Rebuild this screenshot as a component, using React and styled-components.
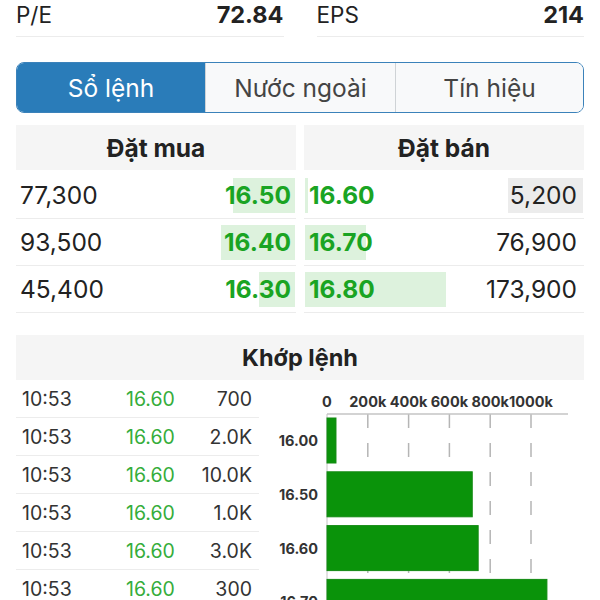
import React from 'react'
import styled, { createGlobalStyle } from 'styled-components'

const GREEN = '#1aa423'
const LIGHT_GREEN = '#ddf2dd'

const stats = [
  { label: 'P/E', value: '72.84' },
  { label: 'EPS', value: '214' }
]

const tabs = ['Sổ lệnh', 'Nước ngoài', 'Tín hiệu']

const bids = [
  { qty: '77,300', price: '16.50', depth: 62 },
  { qty: '93,500', price: '16.40', depth: 74 },
  { qty: '45,400', price: '16.30', depth: 36 }
]

const asks = [
  { qty: '5,200', price: '16.60', depth: 3, qtyDepth: 75 },
  { qty: '76,900', price: '16.70', depth: 61 },
  { qty: '173,900', price: '16.80', depth: 141 }
]

const trades = [
  ['10:53', '16.60', '700'],
  ['10:53', '16.60', '2.0K'],
  ['10:53', '16.60', '10.0K'],
  ['10:53', '16.60', '1.0K'],
  ['10:53', '16.60', '3.0K'],
  ['10:53', '16.60', '300']
]

const volumes = [
  { price: '16.00', vol: 44 },
  { price: '16.50', vol: 712 },
  { price: '16.60', vol: 741 },
  { price: '16.70', vol: 1078 }
]

const App = () => (
  <Page>
    <GlobalStyle />
    <StatsRow>
      {stats.map(s => (
        <StatCell key={s.label}>
          <span>{s.label}</span>
          <StatValue>{s.value}</StatValue>
        </StatCell>
      ))}
    </StatsRow>

    <Tabs>
      {tabs.map((t, i) => (
        <Tab key={t} active={i === 0}>{t}</Tab>
      ))}
    </Tabs>

    <Book>
      <BookSide>
        <BookHeader>Đặt mua</BookHeader>
        {bids.map(b => (
          <BookRow key={b.price}>
            <DepthBar side='right' style={{ width: b.depth }} />
            <Qty>{b.qty}</Qty>
            <Price>{b.price}</Price>
          </BookRow>
        ))}
      </BookSide>
      <BookSide right>
        <BookHeader>Đặt bán</BookHeader>
        {asks.map(a => (
          <BookRow key={a.price} right>
            <DepthBar side='left' style={{ width: a.depth }} />
            {a.qtyDepth && <DepthBar side='right' gray style={{ width: a.qtyDepth }} />}
            <Price>{a.price}</Price>
            <Qty>{a.qty}</Qty>
          </BookRow>
        ))}
      </BookSide>
    </Book>

    <Matched>
      <MatchedHeader>Khớp lệnh</MatchedHeader>
      <MatchedBody>
        <TradeList>
          {trades.map((t, i) => (
            <TradeRow key={i}>
              <span>{t[0]}</span>
              <TradePrice>{t[1]}</TradePrice>
              <TradeVol>{t[2]}</TradeVol>
            </TradeRow>
          ))}
        </TradeList>
        <ChartWrap>
          <VolumeChart />
        </ChartWrap>
      </MatchedBody>
    </Matched>
  </Page>
)

const VolumeChart = () => {
  const x0 = 63
  const step = 40.8 / 200
  const ticks = [0, 200, 400, 600, 800, 1000]
  return (
    <svg width='320' height='230' viewBox='0 0 320 230'>
      {ticks.slice(1).map(t => (
        <line key={t} x1={x0 + t * step} x2={x0 + t * step} y1='34' y2='230'
          stroke='#b5b5b5' strokeWidth='1.5' strokeDasharray='14 15' />
      ))}
      <line x1={x0} x2='304' y1='34' y2='34' stroke='#c4c4c4' strokeWidth='1.5' />
      <line x1={x0} x2={x0} y1='34' y2='230' stroke='#c4c4c4' strokeWidth='1' />
      {ticks.map(t => (
        <text key={t} x={x0 + t * step} y='27' textAnchor='middle'
          fontFamily='Inter, sans-serif' fontWeight='700' fontSize='14.5' fill='#333'>
          {t === 0 ? '0' : `${t}k`}
        </text>
      ))}
      {volumes.map((v, i) => {
        const y = 38 + i * 53.8
        return (
          <g key={v.price}>
            <rect x={x0} y={y} width={v.vol * step} height='45' fill='#0a930a' stroke='#128a12' strokeWidth='1' />
            <text x='54' y={y + 28} textAnchor='end'
              fontFamily='Inter, sans-serif' fontWeight='700' fontSize='14.5' fill='#333'>
              {v.price}
            </text>
          </g>
        )
      })}
    </svg>
  )
}

const GlobalStyle = createGlobalStyle`
  body {
    margin: 0;
    background: #fff;
    font-family: Inter, "Noto Sans", sans-serif;
    color: #222;
    overflow: hidden;
  }
`

const Page = styled.div`
  padding: 0 16px;
  height: 600px;
  overflow: hidden;
`

const StatsRow = styled.div`
  display: grid;
  grid-template-columns: 1fr 1fr;
  column-gap: 33px;
`

const StatCell = styled.div`
  display: flex;
  justify-content: space-between;
  height: 36px;
  line-height: 30px;
  font-size: 22.5px;
  border-bottom: 1px solid #ececec;
`

const StatValue = styled.span`
  font-weight: 700;
  font-size: 23.5px;
`

const Tabs = styled.div`
  margin-top: 25px;
  display: grid;
  grid-template-columns: 188px 190px 1fr;
  height: 51px;
  border: 1.5px solid #3b82ba;
  border-radius: 8px;
  overflow: hidden;
  box-sizing: border-box;
`

const Tab = styled.div`
  display: flex;
  align-items: center;
  justify-content: center;
  font-size: 24.5px;
  background: ${p => (p.active ? '#2a7cb9' : '#f8f9fa')};
  color: ${p => (p.active ? '#fff' : '#444')};
  & + & {
    border-left: 1.5px solid #cfd3d6;
  }
`

const Book = styled.div`
  margin-top: 12px;
  display: grid;
  grid-template-columns: 1fr 1fr;
  column-gap: 8px;
`

const BookSide = styled.div`
  display: flex;
  flex-direction: column;
`

const BookHeader = styled.div`
  height: 45px;
  margin-bottom: 2px;
  background: #f5f5f5;
  display: flex;
  align-items: center;
  justify-content: center;
  font-size: 24.5px;
  font-weight: 700;
`

const BookRow = styled.div`
  position: relative;
  height: 46px;
  border-bottom: 1px solid #ececec;
  display: flex;
  align-items: center;
  justify-content: space-between;
  padding: ${p => (p.right ? '0 7px 0 5px' : '0 5px 0 4px')};
`

const DepthBar = styled.div`
  position: absolute;
  top: 6px;
  bottom: 5px;
  ${p => p.side}: 1px;
  background: ${p => (p.gray ? '#ececec' : LIGHT_GREEN)};
`

const Qty = styled.span`
  position: relative;
  font-size: 24.5px;
`

const Price = styled.span`
  position: relative;
  font-size: 24.5px;
  font-weight: 700;
  color: ${GREEN};
`

const Matched = styled.div`
  margin-top: 22px;
`

const MatchedHeader = styled.div`
  height: 45px;
  background: #f5f5f5;
  display: flex;
  align-items: center;
  justify-content: center;
  font-size: 23.5px;
  font-weight: 700;
`

const MatchedBody = styled.div`
  display: grid;
  grid-template-columns: 243px 1fr;
`

const TradeList = styled.div`
  display: flex;
  flex-direction: column;
`

const TradeRow = styled.div`
  height: 37px;
  border-bottom: 1px solid #ececec;
  display: grid;
  grid-template-columns: 104px 1fr auto;
  align-items: center;
  padding: 0 7px 0 6px;
  font-size: 19.5px;
  color: #333;
`

const TradePrice = styled.span`
  color: #35ad3b;
`

const TradeVol = styled.span`
  text-align: right;
`

const ChartWrap = styled.div`
  padding-left: 5px;
`

export default App
